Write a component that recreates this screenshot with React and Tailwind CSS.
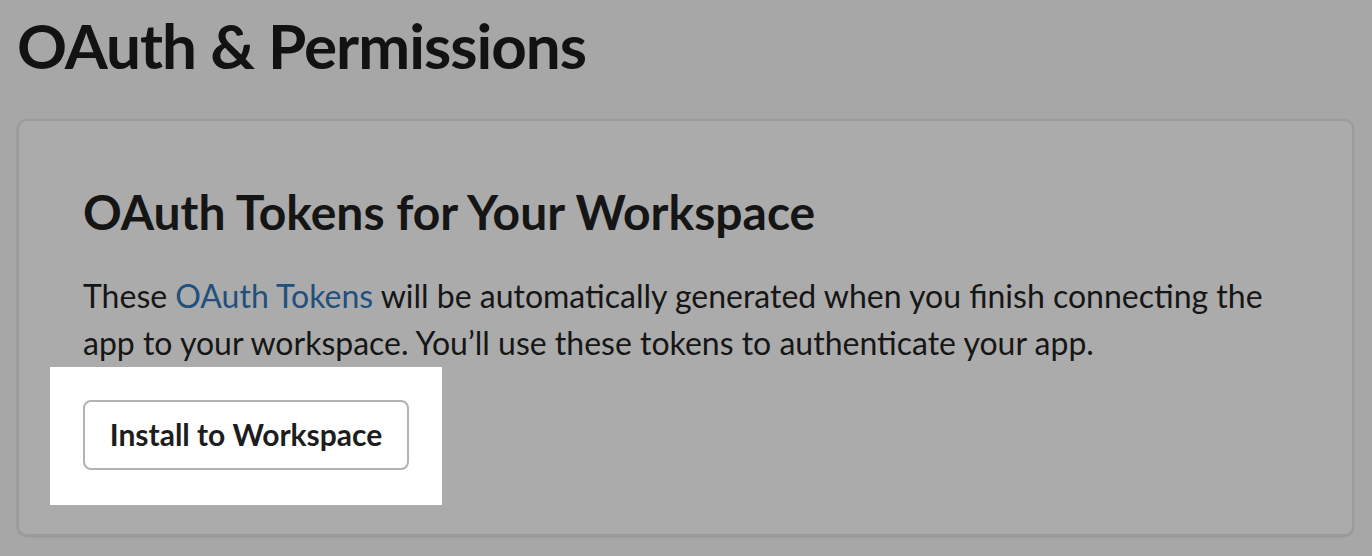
export default function App() {
  return (
    <div className="min-h-screen bg-[#a7a7a7] pt-[14px] pr-[18px] pl-[17px] font-['Lato','Noto_Sans',sans-serif] text-[#161616]">
      <h1 className="text-[62px] leading-none font-bold tracking-[-1px] text-[#121212]">OAuth &amp; Permissions</h1>
      <div className="mt-[43px] rounded-[10px] border-2 border-[#9b9b9b] bg-[#ababab] px-[64px] pt-[62px] pb-[29px] shadow-[0_1px_2px_rgba(0,0,0,0.12)]">
        <h2 className="text-[48px] leading-[1.2] font-bold text-[#151515]">OAuth Tokens for Your Workspace</h2>
        <p className="mt-[31px] text-[32px] leading-[47px]">
          These <span className="text-[#21507e]">OAuth Tokens</span> will be automatically generated when you finish connecting the app to your workspace. You’ll use these tokens to authenticate your app.
        </p>
        <div className="mt-px -ml-[33px] w-fit bg-white px-[33px] pt-[33px] pb-[35px]">
          <button
            type="button"
            className="h-[70px] w-[326px] rounded-lg border-2 border-[#b3b3b3] bg-white text-[30px] font-bold text-[#1d1d1d]"
          >
            Install to Workspace
          </button>
        </div>
      </div>
    </div>
  )
}
